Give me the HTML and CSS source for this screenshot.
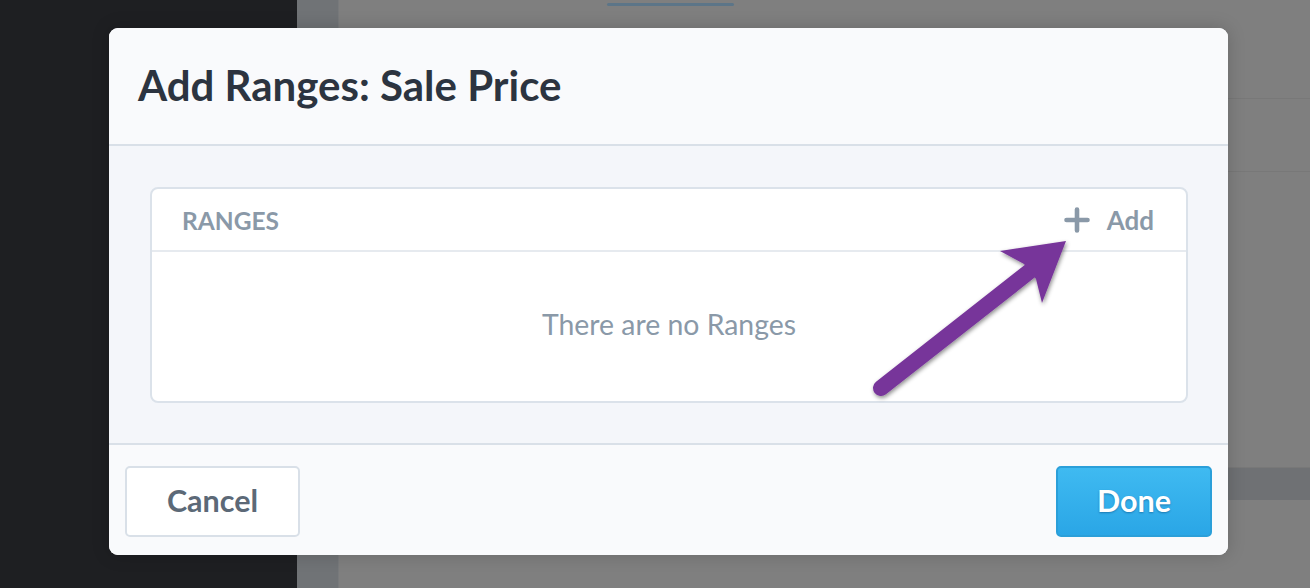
FILE: index.html
```html
<!DOCTYPE html>
<html>
<head>
<meta charset="utf-8">
<link rel="stylesheet" href="styles.css">
</head>
<body>
<div class="backdrop">
  <div class="sidebar"></div>
  <div class="rail"></div>
  <div class="main">
    <div class="tabline"></div>
    <div class="row r1"></div>
    <div class="row r2"></div>
    <div class="row r3"></div>
    <div class="band"></div>
  </div>
</div>

<div class="modal">
  <div class="modal-header">
    <h1 class="title">Add Ranges: Sale Price</h1>
  </div>
  <div class="modal-body">
    <div class="card">
      <div class="card-head">
        <span class="card-label">RANGES</span>
        <span class="add">
          <svg class="plus" width="26" height="26" viewBox="0 0 26 26"><path d="M13 2.5V23.5M2.5 13H23.5" stroke="#8a99a8" stroke-width="4.6" stroke-linecap="round"/></svg>
          <span class="add-text">Add</span>
        </span>
      </div>
      <div class="card-empty">There are no Ranges</div>
    </div>
  </div>
  <div class="modal-footer">
    <button class="btn btn-cancel">Cancel</button>
    <button class="btn btn-done">Done</button>
  </div>
</div>

<svg class="arrow" width="1310" height="588" viewBox="0 0 1310 588">
  <defs>
    <filter id="sh" x="-20%" y="-20%" width="140%" height="140%">
      <feDropShadow dx="1" dy="2" stdDeviation="2" flood-color="#000" flood-opacity="0.45"/>
    </filter>
  </defs>
  <g filter="url(#sh)" fill="#77359a">
    <line x1="881" y1="388" x2="1030" y2="271" stroke="#77359a" stroke-width="16" stroke-linecap="round"/>
    <polygon points="1066,241 1000,251 1024,264 1036,279 1042,303"/>
  </g>
</svg>
</body>
</html>
```

FILE: styles.css
```css
html, body {
  margin: 0;
  padding: 0;
  width: 1310px;
  height: 588px;
  overflow: hidden;
  font-family: Lato, "Open Sans", sans-serif;
}

.backdrop {
  display: flex;
  width: 1310px;
  height: 588px;
  background: #7f7f7f;
}

.sidebar {
  width: 297px;
  background: #1e1f22;
  flex: none;
}

.rail {
  width: 41px;
  background: #707376;
  flex: none;
  border-right: 1px solid #787a7c;
}

.main {
  flex: 1;
  display: flex;
  flex-direction: column;
  background: #7f7f7f;
}

.tabline {
  margin-top: 3px;
  margin-left: 268px;
  width: 127px;
  height: 3px;
  border-radius: 2px;
  background: #5c7588;
}

.row {
  border-bottom: 1px solid #787878;
}

.r1 { height: 92px; }
.r2 { height: 72px; }
.r3 { height: 295px; }

.band {
  height: 32px;
  background: #6f7174;
}

.modal {
  position: absolute;
  left: 109px;
  top: 28px;
  width: 1119px;
  height: 527px;
  border-radius: 9px;
  overflow: hidden;
  background: #f9fafc;
  display: flex;
  flex-direction: column;
  box-shadow: 0 0 18px rgba(0, 0, 0, 0.18);
}

.modal-header {
  height: 116px;
  border-bottom: 2px solid #d9e0e8;
  display: flex;
  align-items: center;
  padding-left: 29px;
  background: #f9fafc;
}

.title {
  margin: 0;
  font-size: 42px;
  font-weight: 700;
  color: #2c3440;
  letter-spacing: 0;
  position: relative;
  top: -1px;
}

.modal-body {
  background: #f4f6fa;
  padding: 41px 40px 40px 41px;
  border-bottom: 2px solid #d9e0e8;
}

.card {
  background: #fff;
  border: 2px solid #dbe2ea;
  border-radius: 8px;
  height: 212px;
  display: flex;
  flex-direction: column;
}

.card-head {
  height: 61px;
  border-bottom: 2px solid #e6eaef;
  display: flex;
  align-items: center;
  justify-content: space-between;
  padding: 0 32px 0 30px;
}

.card-label {
  font-size: 24.5px;
  font-weight: 700;
  color: #8a99a8;
  position: relative;
  top: 1px;
}

.add {
  display: flex;
  align-items: center;
  gap: 17px;
}

.plus {
  display: block;
}

.add-text {
  font-size: 26px;
  font-weight: 700;
  color: #8a99a8;
}

.card-empty {
  flex: 1;
  display: flex;
  align-items: center;
  justify-content: center;
  font-size: 28.4px;
  color: #8a99a8;
  padding-bottom: 6px;
}

.modal-footer {
  flex: 1;
  display: flex;
  justify-content: space-between;
  align-items: flex-start;
  padding: 21px 16px 0 16px;
  background: #f9fafc;
}

.btn {
  height: 71px;
  border-radius: 5px;
  font-family: Lato, "Open Sans", sans-serif;
  font-weight: 700;
  cursor: pointer;
  padding: 0 0 3px 0;
}

.btn-cancel {
  width: 175px;
  font-size: 30.5px;
  background: #fff;
  border: 2px solid #d9e0e8;
  color: #5c6977;
}

.btn-done {
  width: 156px;
  font-size: 30.5px;
  background: linear-gradient(#3fbaf1, #2aa6e6);
  border: 2px solid #2b9fd9;
  color: #fff;
  text-shadow: 0 1px 2px rgba(0, 60, 110, 0.45);
}

.arrow {
  position: absolute;
  left: 0;
  top: 0;
  pointer-events: none;
}
```
